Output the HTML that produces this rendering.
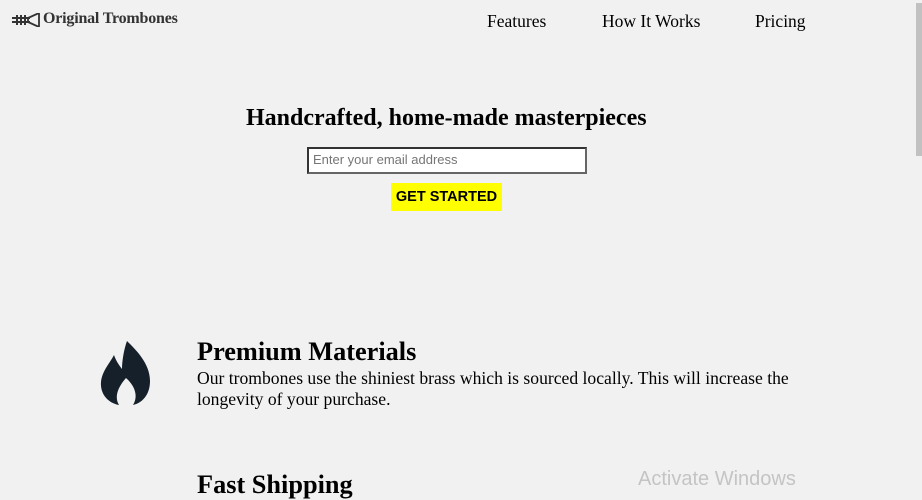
<!DOCTYPE html>
<html><head><style>
body{margin:0;width:922px;height:488px;overflow:hidden;background:#f1f1f1;font-family:"Liberation Serif",serif;position:relative;color:#000}
.a{position:absolute;white-space:nowrap}
</style></head><body>
<svg class="a" style="left:12px;top:13px" width="28" height="14" viewBox="0 0 28 14"><g fill="#333"><rect x="0" y="4" width="18" height="2"/><rect x="0" y="8" width="18" height="2"/><rect x="4" y="2" width="2" height="10"/><rect x="8" y="2" width="2" height="10"/><rect x="12" y="2" width="2" height="10"/><path d="M16 5 L27 0 L27 14 L16 9 Z" fill="none" stroke="#333" stroke-width="1.8"/></g></svg>
<div class="a" style="left:43px;top:10px;font-size:16px;color:#333;font-weight:bold;letter-spacing:-0.2px">Original Trombones</div>
<div class="a" style="left:487px;top:11px;font-size:17.5px">Features</div>
<div class="a" style="left:602px;top:11px;font-size:17.5px">How It Works</div>
<div class="a" style="left:755px;top:11px;font-size:17.5px">Pricing</div>
<div class="a" style="left:246px;top:105px;font-size:24px;font-weight:bold">Handcrafted, home-made masterpieces</div>
<div class="a" style="left:307px;top:147px;width:276px;height:23px;background:#fff;border:2px solid #333;border-right-color:#666;border-bottom-color:#666"></div>
<div class="a" style="left:313px;top:152px;font-family:'Liberation Sans',sans-serif;font-size:13px;color:#757575">Enter your email address</div>
<div class="a" style="left:391px;top:183px;width:111px;height:28px;background:#ff0;font-family:'Liberation Sans',sans-serif;font-weight:bold;font-size:14.5px;line-height:29px;text-align:center">GET STARTED</div>
<svg class="a" style="left:100px;top:341px" width="51" height="65" viewBox="0 0 51 65"><path fill="#15202b" d="M27 0 C35 8 50 22 50 40 C50 54 42 62 33 64 C38 56 36 46 26 37 C18 46 14 56 19 64 C8 62 0 53 1 41 C2 30 10 22 14 14 C16 20 19 24 22 28 C22 20 24 8 27 0 Z"/></svg>
<div class="a" style="left:197px;top:337px;font-size:26.3px;font-weight:bold">Premium Materials</div>
<div class="a" style="left:197px;top:368px;font-size:17.6px;line-height:21px">Our trombones use the shiniest brass which is sourced locally. This will increase the<br>longevity of your purchase.</div>
<div class="a" style="left:197px;top:470px;font-size:26.3px;font-weight:bold">Fast Shipping</div>
<div class="a" style="left:638px;top:468px;font-family:'Liberation Sans',sans-serif;font-size:20px;color:#c4c4c4">Activate Windows</div>
<div class="a" style="left:916px;top:3px;width:6px;height:153px;background:#c1c1c1"></div>
</body></html>
